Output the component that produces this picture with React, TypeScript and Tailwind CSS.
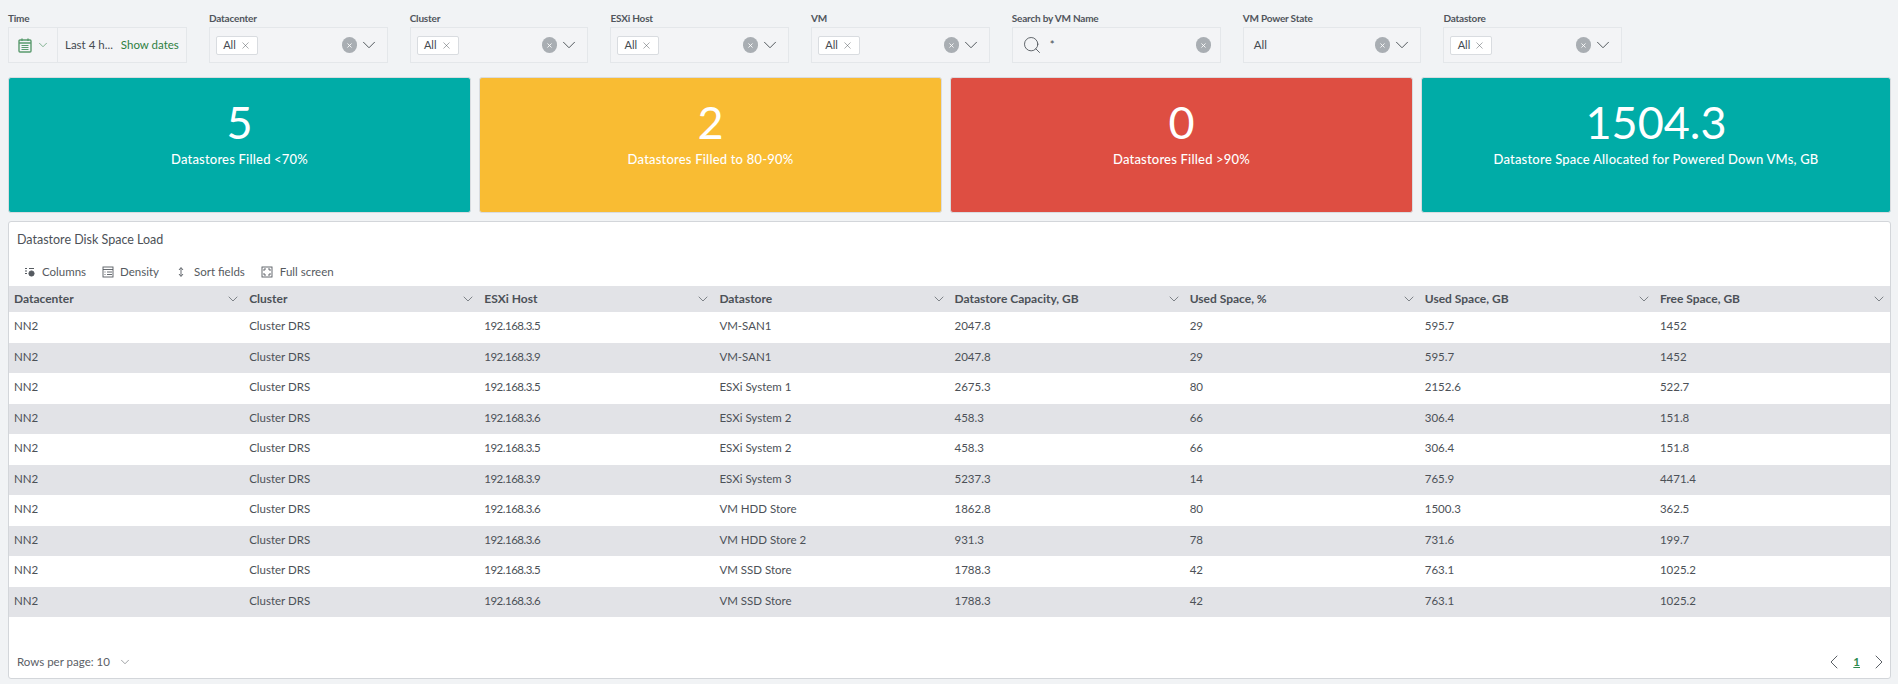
import { X, ChevronDown, ChevronLeft, ChevronRight, Search } from "lucide-react";

const rows = [
	["NN2", "Cluster DRS", "192.168.3.5", "VM-SAN1", "2047.8", "29", "595.7", "1452"],
	["NN2", "Cluster DRS", "192.168.3.9", "VM-SAN1", "2047.8", "29", "595.7", "1452"],
	["NN2", "Cluster DRS", "192.168.3.5", "ESXi System 1", "2675.3", "80", "2152.6", "522.7"],
	["NN2", "Cluster DRS", "192.168.3.6", "ESXi System 2", "458.3", "66", "306.4", "151.8"],
	["NN2", "Cluster DRS", "192.168.3.5", "ESXi System 2", "458.3", "66", "306.4", "151.8"],
	["NN2", "Cluster DRS", "192.168.3.9", "ESXi System 3", "5237.3", "14", "765.9", "4471.4"],
	["NN2", "Cluster DRS", "192.168.3.6", "VM HDD Store", "1862.8", "80", "1500.3", "362.5"],
	["NN2", "Cluster DRS", "192.168.3.6", "VM HDD Store 2", "931.3", "78", "731.6", "199.7"],
	["NN2", "Cluster DRS", "192.168.3.5", "VM SSD Store", "1788.3", "42", "763.1", "1025.2"],
	["NN2", "Cluster DRS", "192.168.3.6", "VM SSD Store", "1788.3", "42", "763.1", "1025.2"],
];

const columns = [
	"Datacenter",
	"Cluster",
	"ESXi Host",
	"Datastore",
	"Datastore Capacity, GB",
	"Used Space, %",
	"Used Space, GB",
	"Free Space, GB",
];

const ClearIcon = () => (
	<div className="flex h-[16px] w-[15px] shrink-0 items-center justify-center rounded-full bg-[#a9aeb3] text-white">
		<X size={7} strokeWidth={3} />
	</div>
);

const Filter = ({ label, width, children }: { label: string; width: string; children: React.ReactNode }) => (
	<div className={`flex shrink-0 flex-col ${width}`}>
		<div className="h-[18px] text-[10px] leading-[18px] font-bold tracking-[-0.2px] text-[#50555c]">{label}</div>
		<div className="flex h-[36px] items-center border border-[#e4e7ea] bg-[#f3f4f6] px-[6px] text-[11.5px] text-[#444a50]">
			{children}
		</div>
	</div>
);

const AllFilter = ({ label }: { label: string }) => (
	<Filter label={label} width="w-[178.7px]">
		<div className="flex h-[19px] w-[42px] items-center justify-center gap-[4px] rounded-[2px] border border-[#d9dce0] bg-white text-[11px]">
			All <X size={11} strokeWidth={1} />
		</div>
		<div className="flex-1" />
		<ClearIcon />
		<ChevronDown size={22} strokeWidth={1} className="mr-[1px] ml-[1px]" />
	</Filter>
);

const Card = ({ value, label, color, width }: { value: string; label: string; color: string; width: string }) => (
	<div className={`flex h-[136px] flex-col items-center rounded-[3px] border border-[#d9dce0] pt-[16px] text-white ${color} ${width}`}>
		<div className="text-[45px] leading-[56px]">{value}</div>
		<div className="text-[13px] leading-[18px] font-medium tracking-[0.2px]">{label}</div>
	</div>
);

export default function App() {
	return (
		<div className="h-[684px] w-[1898px] overflow-hidden bg-[#f1f3f5] font-['Lato',sans-serif]">
			<div className="flex gap-[22px] pt-[9px] pl-[8px]">
				<Filter label="Time" width="w-[179px]">
					<div className="-ml-[6px] flex h-full w-[49px] shrink-0 items-center justify-center gap-[4px] border-r border-[#e4e7ea] pl-[2px]">
						<svg width="14" height="15" viewBox="0 0 14 15" fill="none" stroke="#5a9a6e" strokeWidth="1.4">
							<rect x="1" y="2" width="12" height="12" rx="1" />
							<path d="M1 5h12M4 .5v2.5M10 .5v2.5" />
							<path d="M3.5 7.5h7M3.5 9.5h7M3.5 11.5h7" strokeWidth="1" />
						</svg>
						<ChevronDown size={14} strokeWidth={1.25} color="#5a9a6e" />
					</div>
					<span className="ml-[7px] whitespace-nowrap">Last 4 h...</span>
					<span className="ml-[8px] whitespace-nowrap text-[#2d7f3f]">Show dates</span>
				</Filter>
				<AllFilter label="Datacenter" />
				<AllFilter label="Cluster" />
				<AllFilter label="ESXi Host" />
				<AllFilter label="VM" />
				<Filter label="Search by VM Name" width="w-[209px]">
					<Search size={20} strokeWidth={1} className="ml-[3px]" />
					<span className="ml-[8px] flex-1">*</span>
					<ClearIcon />
					<div className="w-[3px]" />
				</Filter>
				<Filter label="VM Power State" width="w-[178.7px]">
					<span className="ml-[4px]">All</span>
					<div className="flex-1" />
					<ClearIcon />
					<ChevronDown size={22} strokeWidth={1} className="mr-[1px] ml-[1px]" />
				</Filter>
				<AllFilter label="Datastore" />
			</div>

			<div className="mt-[14px] ml-[8px] flex w-[1883px] gap-[8px]">
				<Card value="5" label="Datastores Filled <70%" color="bg-[#00aca7]" width="w-[463px]" />
				<Card value="2" label="Datastores Filled to 80-90%" color="bg-[#f9bc33]" width="w-[463px]" />
				<Card value="0" label="Datastores Filled >90%" color="bg-[#de4e42]" width="w-[463px]" />
				<Card value="1504.3" label="Datastore Space Allocated for Powered Down VMs, GB" color="bg-[#00aca7]" width="flex-1" />
			</div>

			<div className="mt-[8px] ml-[8px] flex h-[458px] w-[1883px] flex-col rounded-[3px] border border-[#d3d6da] bg-white text-[#4c5157]">
				<div className="pt-[9px] pl-[8px] text-[12.5px] leading-[18px]">Datastore Disk Space Load</div>
				<div className="mt-[11px] flex h-[26px] items-center gap-[16px] pb-[2px] pl-[15px] text-[11.5px] text-[#555a60]">
					<span className="flex items-center gap-[6px]">
						<svg width="12" height="12" viewBox="0 0 12 12" fill="none" stroke="#555a60">
							<path d="M1 2.5h2M1 5h2M1 7.5h2M5 2.5h5" />
							<circle cx="7.5" cy="7.5" r="2.6" fill="#555a60" />
						</svg>
						Columns
					</span>
					<span className="flex items-center gap-[6px]">
						<svg width="12" height="12" viewBox="0 0 12 12" fill="none" stroke="#555a60" strokeWidth="0.9">
							<rect x="1" y="1" width="10" height="10" />
							<path d="M1 3.5h10M2.5 6h1M5 6h5M2.5 8.5h1M5 8.5h5" />
						</svg>
						Density
					</span>
					<span className="flex items-center gap-[7px]">
						<svg width="12" height="12" viewBox="0 0 12 12" fill="none" stroke="#555a60" strokeWidth="0.9">
							<path d="M4 4l2-2.5L8 4M4 8l2 2.5L8 8M6 2v8" />
						</svg>
						Sort fields
					</span>
					<span className="flex items-center gap-[7px]">
						<svg width="12" height="12" viewBox="0 0 12 12" fill="none" stroke="#555a60" strokeWidth="0.9">
							<rect x="1" y="1" width="10" height="10" />
							<path d="M3 5V3h2M7 3h2v2M9 7v2H7M5 9H3V7" />
						</svg>
						Full screen
					</span>
				</div>
				<div className="grid h-[26px] shrink-0 grid-cols-8 items-center bg-[#e2e3e7] text-[12px] font-bold text-[#4c5157]">
					{columns.map((c) => (
						<div key={c} className="flex items-center justify-between pr-[3px] pl-[5px]">
							{c}
							<ChevronDown size={16} strokeWidth={1} />
						</div>
					))}
				</div>
				{rows.map((r, i) => (
					<div key={i} className={`grid h-[30.5px] shrink-0 grid-cols-8 items-center pb-[3px] text-[11.5px] ${i % 2 ? "bg-[#e2e3e7]" : "bg-white"}`}>
						{r.map((v, j) => (
							<div key={j} className={j === 2 ? "pl-[5px] tracking-[-0.5px]" : "pl-[5px]"}>
								{v}
							</div>
						))}
					</div>
				))}
				<div className="flex flex-1 items-end justify-between pb-[4px] pl-[8px] text-[11.5px] text-[#5b6066]">
					<div className="flex h-[24px] items-center gap-[8px]">
						Rows per page: 10 <ChevronDown size={14} strokeWidth={1} />
					</div>
					<div className="-mr-[1px] flex h-[24px] items-center gap-[7px]">
						<ChevronLeft size={24} strokeWidth={1} />
						<span className="font-bold text-[#2d8a4e] underline">1</span>
						<ChevronRight size={24} strokeWidth={1} />
					</div>
				</div>
			</div>
		</div>
	);
}
